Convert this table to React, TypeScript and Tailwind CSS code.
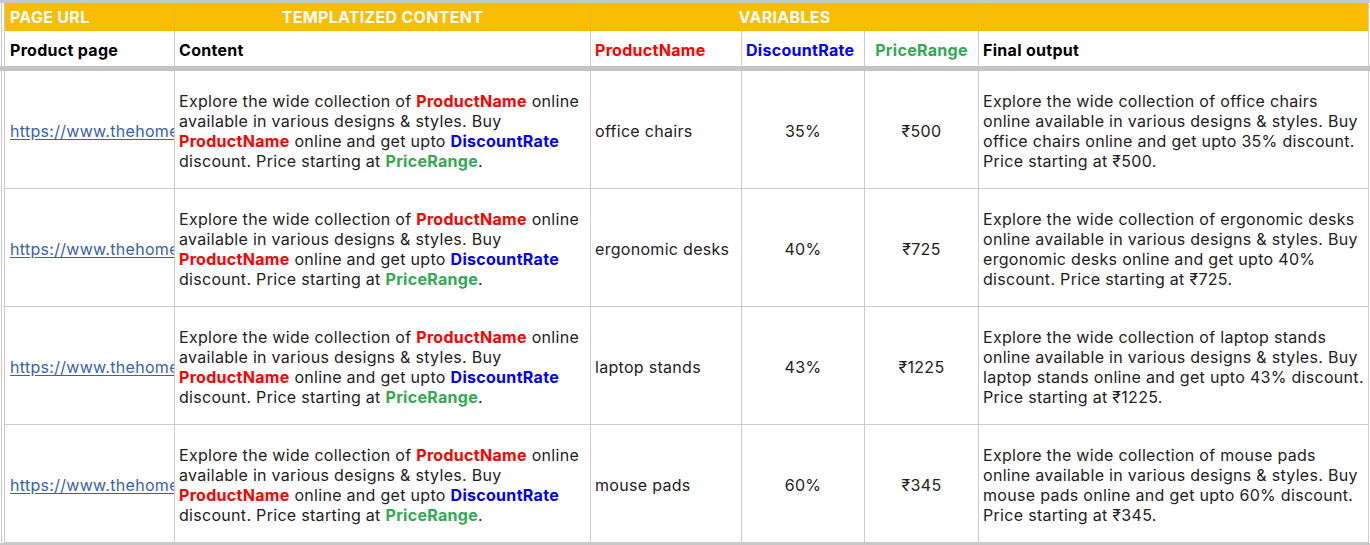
import React from "react";

const rows = [
  {
    name: "office chairs",
    rate: "35%",
    price: "₹500",
    out: [
      "Explore the wide collection of office chairs",
      "online available in various designs & styles. Buy",
      "office chairs online and get upto 35% discount.",
      "Price starting at ₹500.",
    ],
  },
  {
    name: "ergonomic desks",
    rate: "40%",
    price: "₹725",
    out: [
      "Explore the wide collection of ergonomic desks",
      "online available in various designs & styles. Buy",
      "ergonomic desks online and get upto 40%",
      "discount. Price starting at ₹725.",
    ],
  },
  {
    name: "laptop stands",
    rate: "43%",
    price: "₹1225",
    out: [
      "Explore the wide collection of laptop stands",
      "online available in various designs & styles. Buy",
      "laptop stands online and get upto 43% discount.",
      "Price starting at ₹1225.",
    ],
  },
  {
    name: "mouse pads",
    rate: "60%",
    price: "₹345",
    out: [
      "Explore the wide collection of mouse pads",
      "online available in various designs & styles. Buy",
      "mouse pads online and get upto 60% discount.",
      "Price starting at ₹345.",
    ],
  },
];

function Gutter() {
  return (
    <div className="w-[5px] shrink-0 border-r border-[#c8c8c8] pl-px">
      <div className="w-px h-full bg-[#c8c8c8]" />
    </div>
  );
}

const cols = "grid grid-cols-[170px_416px_151px_123px_114px_390px]";

export default function App() {
  return (
    <div className="w-[1370px] h-[545px] bg-white overflow-hidden font-[Inter,'Noto_Sans',sans-serif] text-[16px] leading-[20px] tracking-[0.3px] text-[#222]">
      <div className="h-[3px] bg-[#c8c8c8]" />
      {/* header rows */}
      <div className="flex">
        <Gutter />
        <div className={cols}>
          <div className="h-[28px] bg-[#fbbc04] border-r border-[#e6b740] flex items-center pl-[5px] text-white font-bold">
            PAGE URL
          </div>
          <div className="h-[28px] bg-[#fbbc04] border-r border-[#e6b740] flex items-center justify-center text-white font-bold">
            TEMPLATIZED CONTENT
          </div>
          <div className="col-span-3 h-[28px] bg-[#fbbc04] border-r border-[#e6b740] flex items-center justify-center text-white font-bold">
            VARIABLES
          </div>
          <div className="h-[28px] bg-[#fbbc04] border-r border-[#d0d0d0]" />

          <div className="h-[35px] border-r border-[#cbcbcb] flex items-end pb-[6px] pl-[5px] font-bold text-black">
            Product page
          </div>
          <div className="h-[35px] border-r border-[#cbcbcb] flex items-end pb-[6px] pl-[4px] font-bold text-black">
            Content
          </div>
          <div className="h-[35px] border-r border-[#cbcbcb] flex items-end pb-[6px] pl-[4px] font-bold text-[#ff0000]">
            ProductName
          </div>
          <div className="h-[35px] border-r border-[#cbcbcb] flex items-end pb-[6px] pl-[4px] font-bold text-[#0000ff] whitespace-nowrap overflow-hidden">
            DiscountRate
          </div>
          <div className="h-[35px] border-r border-[#cbcbcb] flex items-end justify-center pb-[6px] font-bold text-[#34a853] whitespace-nowrap overflow-hidden">
            PriceRange
          </div>
          <div className="h-[35px] border-r border-[#cbcbcb] flex items-end pb-[6px] pl-[4px] font-bold text-black">
            Final output
          </div>
        </div>
      </div>
      <div className="h-[5px] bg-[#c4c4c4]" />
      {/* data rows */}
      <div className="flex">
        <Gutter />
        <div className={cols}>
          {rows.map((r, i) => (
            <React.Fragment key={i}>
              <div className="h-[118px] pt-[2px] border-r border-b border-[#cbcbcb] flex items-center pl-[5px] overflow-hidden whitespace-nowrap">
                <span className="text-[#3a60b2] underline underline-offset-2">
                  https://www.thehomeoffice.com/products
                </span>
              </div>
              <div className="h-[118px] pt-[2px] border-r border-b border-[#cbcbcb] flex items-center pl-[4px] overflow-hidden">
                <div className="whitespace-nowrap">
                  <div>
                    Explore the wide collection of{" "}
                    <b className="text-[#ff0000]">ProductName</b> online
                  </div>
                  <div>available in various designs &amp; styles. Buy</div>
                  <div>
                    <b className="text-[#ff0000]">ProductName</b> online and get upto{" "}
                    <b className="text-[#0000ff]">DiscountRate</b>
                  </div>
                  <div>
                    discount. Price starting at{" "}
                    <b className="text-[#34a853]">PriceRange</b>.
                  </div>
                </div>
              </div>
              <div className="h-[118px] pt-[2px] border-r border-b border-[#cbcbcb] flex items-center pl-[4px] whitespace-nowrap">
                {r.name}
              </div>
              <div className="h-[118px] pt-[2px] border-r border-b border-[#cbcbcb] flex items-center justify-center">
                {r.rate}
              </div>
              <div className="h-[118px] pt-[2px] border-r border-b border-[#cbcbcb] flex items-center justify-center">
                {r.price}
              </div>
              <div className="h-[118px] pt-[2px] border-r border-b border-[#cbcbcb] flex items-center pl-[4px] overflow-hidden">
                <div className="whitespace-nowrap">
                  {r.out.map((l, j) => (
                    <div key={j}>{l}</div>
                  ))}
                </div>
              </div>
            </React.Fragment>
          ))}
        </div>
      </div>
      <div className="h-[2px] bg-[#c8c8c8]" />
    </div>
  );
}
